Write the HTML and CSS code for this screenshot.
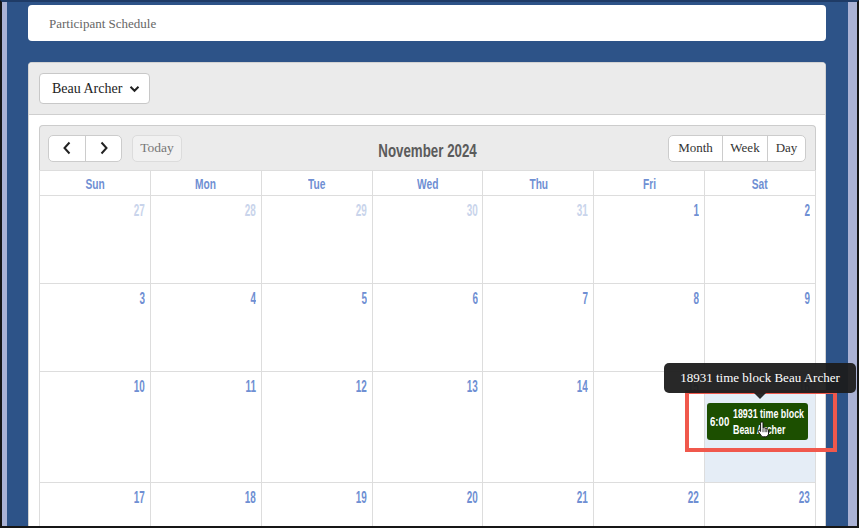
FILE: index.html
```html
<!DOCTYPE html>
<html>
<head>
<meta charset="utf-8">
<link rel="stylesheet" href="styles.css">
</head>
<body>
<div class="frame">
  <div class="rail">
    <div class="main">
      <div class="title-card">Participant Schedule</div>
      <div class="card">
        <div class="card-head">
          <div class="select">
            <span>Beau Archer</span>
            <svg width="11" height="8" viewBox="0 0 11 8"><path d="M1.5 1.8 L5.5 5.8 L9.5 1.8" fill="none" stroke="#222" stroke-width="2"/></svg>
          </div>
        </div>
        <div class="card-body">
          <div class="cal">
            <div class="toolbar">
              <div class="tb-left">
                <div class="btn-group">
                  <div class="btn nav"><svg width="10" height="14" viewBox="0 0 10 14"><path d="M7.5 1.5 L2.5 7 L7.5 12.5" fill="none" stroke="#222" stroke-width="2"/></svg></div>
                  <div class="btn nav"><svg width="10" height="14" viewBox="0 0 10 14"><path d="M2.5 1.5 L7.5 7 L2.5 12.5" fill="none" stroke="#222" stroke-width="2"/></svg></div>
                </div>
                <div class="btn today">Today</div>
              </div>
              <h2 class="cal-title"><span class="cond">November 2024</span></h2>
              <div class="btn-group views">
                <div class="btn">Month</div>
                <div class="btn">Week</div>
                <div class="btn">Day</div>
              </div>
            </div>
            <div class="grid">
              <div class="row head">
                <div class="cell"><span class="cond">Sun</span></div><div class="cell"><span class="cond">Mon</span></div><div class="cell"><span class="cond">Tue</span></div><div class="cell"><span class="cond">Wed</span></div><div class="cell"><span class="cond">Thu</span></div><div class="cell"><span class="cond">Fri</span></div><div class="cell"><span class="cond">Sat</span></div>
              </div>
              <div class="row week">
                <div class="cell other"><span class="num">27</span></div>
                <div class="cell other"><span class="num">28</span></div>
                <div class="cell other"><span class="num">29</span></div>
                <div class="cell other"><span class="num">30</span></div>
                <div class="cell other"><span class="num">31</span></div>
                <div class="cell"><span class="num">1</span></div>
                <div class="cell"><span class="num">2</span></div>
              </div>
              <div class="row week">
                <div class="cell"><span class="num">3</span></div>
                <div class="cell"><span class="num">4</span></div>
                <div class="cell"><span class="num">5</span></div>
                <div class="cell"><span class="num">6</span></div>
                <div class="cell"><span class="num">7</span></div>
                <div class="cell"><span class="num">8</span></div>
                <div class="cell"><span class="num">9</span></div>
              </div>
              <div class="row week tall">
                <div class="cell"><span class="num">10</span></div>
                <div class="cell"><span class="num">11</span></div>
                <div class="cell"><span class="num">12</span></div>
                <div class="cell"><span class="num">13</span></div>
                <div class="cell"><span class="num">14</span></div>
                <div class="cell"><span class="num">15</span></div>
                <div class="cell today-cell"><span class="num">16</span>
                  <div class="event">
                    <div class="ev-inner">
                      <span class="ev-time">6:00</span>
                      <span class="ev-title">18931 time block<br>Beau Archer</span>
                    </div>
                  </div>
                </div>
              </div>
              <div class="row week">
                <div class="cell"><span class="num">17</span></div>
                <div class="cell"><span class="num">18</span></div>
                <div class="cell"><span class="num">19</span></div>
                <div class="cell"><span class="num">20</span></div>
                <div class="cell"><span class="num">21</span></div>
                <div class="cell"><span class="num">22</span></div>
                <div class="cell"><span class="num">23</span></div>
              </div>
            </div>
          </div>
        </div>
      </div>
    </div>
  </div>
  <div class="highlight"></div>
  <div class="tooltip">18931 time block Beau Archer</div>
  <svg class="cursor" width="14" height="17" viewBox="0 0 14 17">
    <path d="M4.2 1.2 C4.9 0.6 6 1 6 2 L6 7 L6.6 6.7 C7.3 6.4 8 6.8 8.1 7.4 C8.8 7 9.6 7.4 9.7 8 C10.4 7.7 11.3 8.1 11.4 8.9 L11.6 12 C11.6 14 10.4 15.6 8.6 15.8 L6.5 15.8 C5.3 15.8 4.6 15.1 3.9 14.2 L1.3 10.6 C0.8 9.9 1.4 8.9 2.3 9.3 L3.6 10.4 L3.6 2.2 C3.6 1.8 3.8 1.4 4.2 1.2 Z" fill="#fff" stroke="#111" stroke-width="1"/>
    <path d="M6 7.2 L6 11.2 M8.1 7.6 L8.1 11.2 M9.8 8.2 L9.8 11.2" stroke="#111" stroke-width="0.8"/>
  </svg>
</div>
</body>
</html>
```
FILE: styles.css
```css
* { box-sizing: border-box; }
html, body { margin: 0; padding: 0; }
body {
  background: #111;
  width: 859px;
  height: 528px;
  overflow: hidden;
}
.frame {
  position: relative;
  width: 859px;
  height: 528px;
  border: 2px solid #161616;
  border-top-color: #1f3b66;
  overflow: hidden;
}
.rail {
  height: 100%;
  background: #aab2d5;
  padding: 0 9px 0 5px;
}
.main {
  height: 100%;
  background: #2d5388;
  padding: 3px 22px 0 21px;
  display: flex;
  flex-direction: column;
  gap: 21px;
}
.title-card {
  flex-shrink: 0;
  height: 36px;
  background: #fff;
  border-radius: 4px;
  padding: 1px 0 0 21px;
  display: flex;
  align-items: center;
  font-family: "Liberation Serif", serif;
  font-size: 13px;
  color: #666;
}
.card {
  background: #fff;
  border-radius: 4px 4px 0 0;
  border: 1px solid #d3d3d3;
  border-bottom: 0;
  flex: 1 0 auto;
}
.card-head {
  background: #ebebeb;
  padding: 10px 10px;
  border-bottom: 1px solid #cfcfcf;
  border-radius: 4px 4px 0 0;
}
.select {
  width: 111px;
  height: 31px;
  background: #fff;
  border: 1px solid #c8c8c8;
  border-radius: 4px;
  display: flex;
  align-items: center;
  justify-content: space-between;
  padding: 0 9px 0 12px;
  font-family: "Liberation Serif", serif;
  font-size: 14px;
  color: #222;
}
.card-body {
  padding: 10px 10px 0 10px;
}
.cal {
  width: 777px;
}
.toolbar {
  height: 45px;
  background: #ebebeb;
  border: 1px solid #cccccc;
  border-bottom: 0;
  border-radius: 4px 4px 0 0;
  display: flex;
  align-items: center;
  justify-content: space-between;
  padding: 0 9px 0 8px;
  position: relative;
}
.tb-left {
  display: flex;
  gap: 10px;
}
.btn-group {
  display: flex;
  background: #fff;
  border: 1px solid #cccccc;
  border-radius: 5px;
  height: 27px;
}
.btn {
  height: 100%;
  display: flex;
  align-items: center;
  justify-content: center;
  font-family: "Liberation Serif", serif;
  font-size: 13px;
  color: #333;
  padding: 0 8px;
}
.btn-group .btn + .btn { border-left: 1px solid #cccccc; }
.btn.nav { width: 36px; padding: 0; }
.today {
  height: 27px;
  width: 50px;
  background: #f1f1f1;
  border: 1px solid #dcdcdc;
  border-radius: 5px;
  color: #777;
  font-size: 13.5px;
}
.views .btn:nth-child(1) { width: 53px; }
.views .btn:nth-child(2) { width: 45px; }
.views .btn:nth-child(3) { width: 38px; }
.cond {
  display: inline-block;
  transform: scaleX(0.72);
  white-space: nowrap;
}
.cal-title {
  position: absolute;
  left: 0;
  right: 0;
  top: 15px;
  text-align: center;
  margin: 0;
  pointer-events: none;
  font-family: "Liberation Sans", Arial, sans-serif;
  font-weight: bold;
  font-size: 18px;
  line-height: 20px;
  color: #5b5b5b;
}
.cal-title .cond { transform: scaleX(0.74); }
.grid {
  border-left: 1px solid #dddddd;
  border-top: 1px solid #dddddd;
}
.row {
  display: grid;
  grid-template-columns: repeat(7, minmax(0, 1fr));
}
.cell {
  border-right: 1px solid #dddddd;
  border-bottom: 1px solid #dddddd;
  position: relative;
  font-family: "Liberation Sans", Arial, sans-serif;
  font-weight: bold;
  color: #6f8fd3;
  min-width: 0;
}
.head .cell {
  height: 25px;
  text-align: center;
  font-size: 15px;
  line-height: 25px;
}
.head .cell .cond { transform: scaleX(0.68); }
.week .cell {
  height: 88px;
  text-align: right;
  padding: 6px 5px 0 0;
  font-size: 16px;
}
.week.tall .cell { height: 111px; }
.cell.other { color: #c9d4eb; }
.today-cell { background: #e5edf6; }
.num {
  display: inline-block;
  line-height: 17px;
  transform: scaleX(0.62);
  transform-origin: right center;
}
.event {
  margin: 7px 2px 0 2px;
  height: 37px;
  background: #1c4f00;
  border-radius: 3px;
  display: flex;
  align-items: center;
  padding-left: 3px;
  text-align: left;
  color: #fff;
  overflow: hidden;
}
.ev-inner {
  display: flex;
  align-items: center;
  gap: 5px;
  white-space: nowrap;
  transform: scaleX(0.74);
  transform-origin: left center;
}
.ev-time { font-weight: bold; font-size: 13px; }
.ev-title { font-weight: bold; font-size: 12px; line-height: 16px; }
.highlight {
  position: absolute;
  left: 683px;
  top: 388px;
  width: 152px;
  height: 62px;
  border: 4px solid #f0584c;
}
.tooltip {
  position: absolute;
  left: 662px;
  top: 361px;
  width: 192px;
  height: 30px;
  background: rgba(28, 28, 28, 0.95);
  border-radius: 5px;
  color: #fff;
  font-family: "Liberation Serif", serif;
  font-size: 13px;
  display: flex;
  align-items: center;
  justify-content: center;
}
.tooltip::after {
  content: "";
  position: absolute;
  left: 90px;
  bottom: -6px;
  border-left: 6px solid transparent;
  border-right: 6px solid transparent;
  border-top: 6px solid rgba(28, 28, 28, 0.95);
}
.cursor {
  position: absolute;
  left: 755px;
  top: 419px;
}
```
